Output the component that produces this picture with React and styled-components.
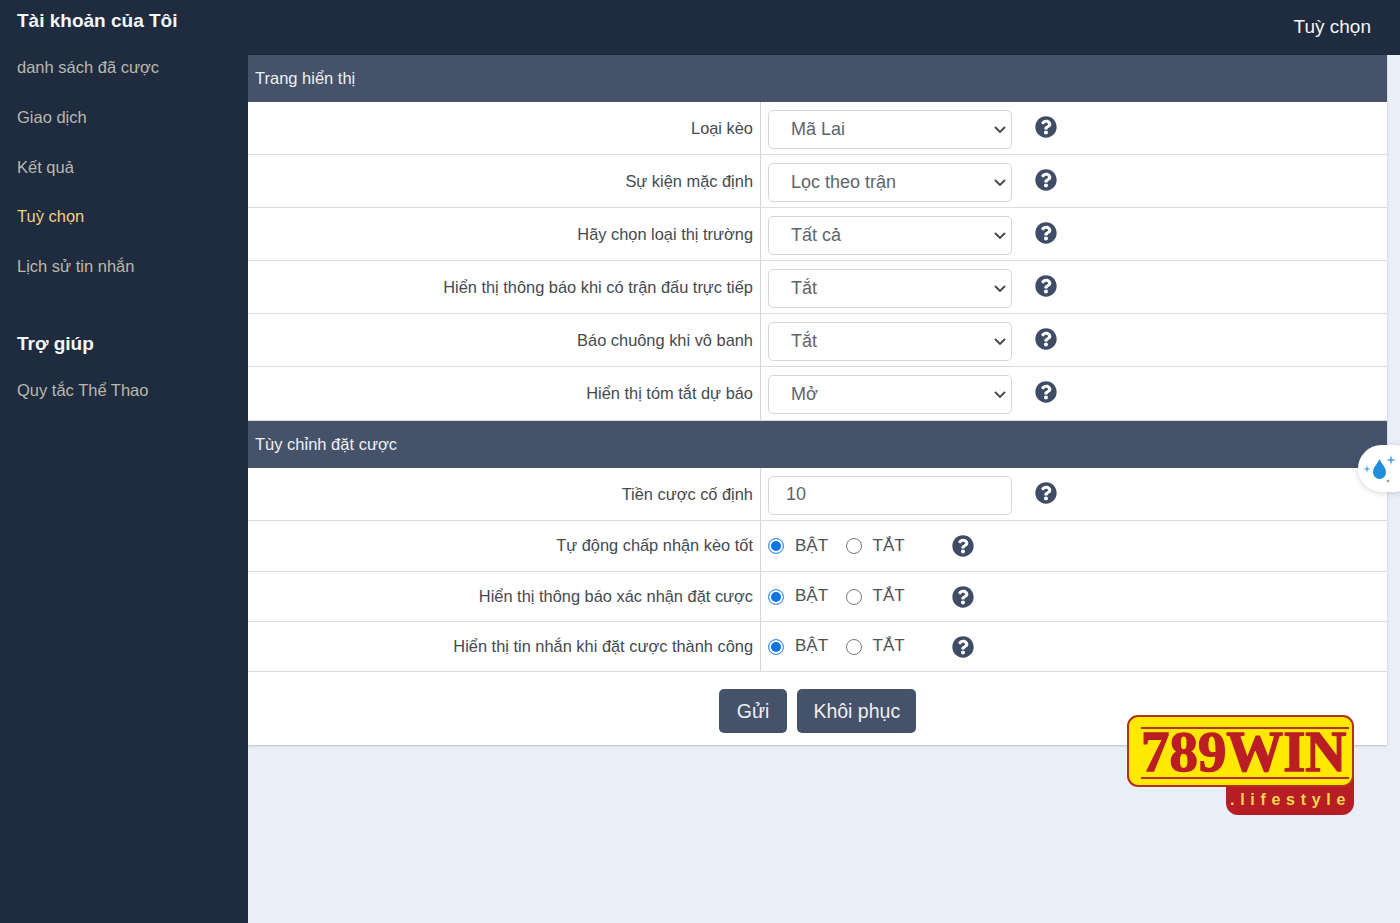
import React from "react";
import styled, { createGlobalStyle } from "styled-components";

const Global = createGlobalStyle`
  html, body { margin: 0; padding: 0; }
  body { font-family: "Liberation Sans", Arial, sans-serif; background: #e9eff6; }
  * { box-sizing: border-box; }
`;

const Page = styled.div`
  display: flex;
  width: 1400px;
  height: 923px;
  overflow: hidden;
  position: relative;
`;

const Sidebar = styled.aside`
  width: 248px;
  flex: none;
  background: #1f2b3e;
  padding: 10px 0 0 17px;
`;

const SideTitle = styled.h3`
  margin: ${(p) => p.$top || 0}px 0 0;
  font-size: 19px;
  line-height: 22px;
  font-weight: 700;
  color: #f6f6f6;
`;

const SideList = styled.ul`
  list-style: none;
  margin: 10.4px 0 0;
  padding: 0;
`;

const SideItem = styled.li`
  font-size: 16.5px;
  line-height: 20px;
  height: 49.6px;
  padding-top: 15px;
  color: ${(p) => (p.$active ? "#f2cf7e" : "#b9b9b0")};
`;

const Main = styled.main`
  flex: 1;
  display: flex;
  flex-direction: column;
  min-width: 0;
`;

const TopBar = styled.header`
  height: 55px;
  background: #1f2b3e;
  color: #f4f4f4;
  font-size: 19px;
  line-height: 53px;
  text-align: right;
  padding-right: 29px;
`;

const Panel = styled.section`
  width: 1139px;
  background: #fff;
  box-shadow: 0 1px 2px rgba(40, 50, 70, 0.25);
`;

const SectionHead = styled.div`
  height: 47px;
  background: #455269;
  color: #eef0f3;
  font-size: 16.5px;
  line-height: 47px;
  padding-left: 7px;
`;

const Row = styled.div`
  display: flex;
  height: ${(p) => p.$h || 53}px;
  border-bottom: 1px solid #dcdcdc;
`;

const Label = styled.div`
  width: 513px;
  flex: none;
  padding-right: 7px;
  text-align: right;
  font-size: 16.4px;
  line-height: 20px;
  color: #45494f;
  padding-top: ${(p) => p.$pt}px;
  border-right: 1px solid #d6d6d6;
`;

const Cell = styled.div`
  display: flex;
  align-items: center;
  padding-left: 7px;
  flex: 1;
  padding-top: ${(p) => p.$pt || 0}px;
  padding-bottom: ${(p) => p.$pb || 0}px;
`;

const SelectWrap = styled.div`
  position: relative;
  width: 244px;
  height: 39px;
  flex: none;
`;

const NativeSelect = styled.select`
  appearance: none;
  width: 100%;
  height: 100%;
  border: 1px solid #d3d6da;
  border-radius: 5px;
  background: #fff;
  padding: 0 0 2px 22px;
  font: 18px "Liberation Sans", Arial, sans-serif;
  color: #5f656c;
  outline: none;
`;

const Chevron = styled.svg`
  position: absolute;
  right: 6px;
  top: 15px;
  width: 12px;
  height: 9px;
  pointer-events: none;
`;

const TextInput = styled.input`
  width: 244px;
  height: 39px;
  flex: none;
  border: 1px solid #d3d6da;
  border-radius: 5px;
  padding: 0 0 3px 17px;
  font: 18px "Liberation Sans", Arial, sans-serif;
  color: #5f656c;
  outline: none;
`;

const HelpIcon = styled.svg`
  width: 22px;
  height: 22px;
  flex: none;
  display: block;
  margin-left: ${(p) => p.$ml}px;
  margin-top: ${(p) => p.$mt}px;
`;

const RadioLabel = styled.label`
  display: flex;
  align-items: center;
  font-size: 17px;
  color: #4d5157;
  width: 77.5px;
`;

const RadioDot = styled.input`
  appearance: none;
  width: 16px;
  height: 16px;
  margin: 1px 11px 0 0;
  border-radius: 50%;
  border: 1.5px solid ${(p) => (p.checked ? "#3f96ee" : "#777")};
  background: ${(p) => (p.checked ? "#0a75e8" : "#fff")};
  box-shadow: ${(p) => (p.checked ? "inset 0 0 0 2px #fff" : "none")};
  flex: none;
`;

const Actions = styled.div`
  display: flex;
  justify-content: center;
  gap: 10px;
  height: 73px;
  padding-top: 17px;
  background: #fff;
`;

const Button = styled.button`
  height: 44px;
  padding: 0 ${(p) => p.$px}px;
  background: #455269;
  color: #eef0f3;
  border: none;
  border-radius: 5px;
  font: 19.5px "Liberation Sans", Arial, sans-serif;
`;

const Floating = styled.div`
  position: absolute;
  left: 1358px;
  top: 445px;
  width: 60px;
  height: 47px;
  border-radius: 24px;
  background: #fff;
  box-shadow: 0 1px 6px rgba(60, 70, 90, 0.22);
`;

const FloatIcon = styled.svg`
  position: absolute;
  left: 4px;
  top: 7px;
  width: 34px;
  height: 34px;
`;

const Logo = styled.div`
  position: absolute;
  left: 1127px;
  top: 715px;
  width: 227px;
  height: 100px;
`;

const LogoTail = styled.div`
  position: absolute;
  right: 0;
  bottom: 0;
  width: 128px;
  height: 50px;
  background: #b81c24;
  border-radius: 0 0 12px 12px;
  color: #ecd94c;
  font: 700 16px "Liberation Sans", Arial, sans-serif;
  letter-spacing: 5.7px;
  padding: 24px 0 0 4px;
  line-height: 22px;
  white-space: nowrap;
`;

const LogoPlate = styled.div`
  position: absolute;
  inset: 0 0 28px 0;
  background: #ffe900;
  border: 2px solid #b5301f;
  border-radius: 11px;
  display: flex;
  align-items: center;
  justify-content: center;
`;

const LogoRule = styled.i`
  position: absolute;
  left: 12px;
  right: 3px;
  height: 2px;
  background: #b5301f;
  top: ${(p) => p.$top}px;
`;

const LogoWord = styled.span`
  font: 700 58px/60px "Liberation Serif", serif;
  color: #bb1d25;
  -webkit-text-stroke: 1.4px #bb1d25;
  transform: translate(3px, 1px) scaleX(0.98);
  white-space: nowrap;
`;

const Help = ({ ml, mt }) => (
  <HelpIcon $ml={ml} $mt={mt} viewBox="0 0 512 512">
    <path
      fill="#3f4c65"
      d="M504 256c0 137-111 248-248 248S8 393 8 256C8 119 119 8 256 8s248 111 248 248zM263 90c-54 0-89 23-116 64-4 5-2 12 3 16l35 26c5 4 13 3 17-2 18-23 30-36 57-36 20 0 45 13 45 33 0 15-13 23-33 34-24 13-55 30-55 71v4c0 7 5 12 12 12h56c7 0 12-5 12-12v-1c0-29 84-30 84-107 0-58-60-102-117-102zm-7 248c-26 0-47 21-47 46s21 46 47 46 46-21 46-46-20-46-46-46z"
    />
  </HelpIcon>
);

const Dropdown = ({ value }) => (
  <SelectWrap>
    <NativeSelect defaultValue={value}>
      <option>{value}</option>
    </NativeSelect>
    <Chevron viewBox="0 0 12 9">
      <path d="M1 2l5 5 5-5" fill="none" stroke="#444" strokeWidth="1.8" />
    </Chevron>
  </SelectWrap>
);

const Toggle = ({ name }) => (
  <>
    <RadioLabel>
      <RadioDot type="radio" name={name} checked readOnly />
      BẬT
    </RadioLabel>
    <RadioLabel>
      <RadioDot type="radio" name={name} checked={false} readOnly />
      TẮT
    </RadioLabel>
  </>
);

const selects = [
  ["Loại kèo", "Mã Lai"],
  ["Sự kiện mặc định", "Lọc theo trận"],
  ["Hãy chọn loại thị trường", "Tất cả"],
  ["Hiển thị thông báo khi có trận đấu trực tiếp", "Tắt"],
  ["Báo chuông khi vô banh", "Tắt"],
  ["Hiển thị tóm tắt dự báo", "Mở"],
];

const toggles = [
  "Tự động chấp nhận kèo tốt",
  "Hiển thị thông báo xác nhận đặt cược",
  "Hiển thị tin nhắn khi đặt cược thành công",
];

export default function App() {
  return (
    <Page>
      <Global />
      <Sidebar>
        <SideTitle>Tài khoản của Tôi</SideTitle>
        <SideList>
          <SideItem>danh sách đã cược</SideItem>
          <SideItem>Giao dịch</SideItem>
          <SideItem>Kết quả</SideItem>
          <SideItem $active>Tuỳ chọn</SideItem>
          <SideItem>Lịch sử tin nhắn</SideItem>
        </SideList>
        <SideTitle $top={42.5}>Trợ giúp</SideTitle>
        <SideList>
          <SideItem>Quy tắc Thể Thao</SideItem>
        </SideList>
      </Sidebar>
      <Main>
        <TopBar>Tuỳ chọn</TopBar>
        <Panel>
          <SectionHead>Trang hiển thị</SectionHead>
          {selects.map(([label, value], i) => (
            <Row key={label} $h={i === 5 ? 54 : 53}>
              <Label $pt={16}>{label}</Label>
              <Cell $pt={3} $pb={i === 5 ? 1 : 0}>
                <Dropdown value={value} />
                <Help ml={23} mt={-5} />
              </Cell>
            </Row>
          ))}
          <SectionHead>Tùy chỉnh đặt cược</SectionHead>
          <Row>
            <Label $pt={16}>Tiền cược cố định</Label>
            <Cell $pt={3}>
              <TextInput defaultValue="10" />
              <Help ml={23} mt={-5} />
            </Cell>
          </Row>
          {toggles.map((label, i) => (
            <Row key={label} $h={i === 0 ? 51 : 50}>
              <Label $pt={14}>{label}</Label>
              <Cell $pb={1}>
                <Toggle name={`t${i}`} />
                <Help ml={29} mt={1} />
              </Cell>
            </Row>
          ))}
          <Actions>
            <Button $px={18}>Gửi</Button>
            <Button $px={16}>Khôi phục</Button>
          </Actions>
        </Panel>
      </Main>
      <Floating>
        <FloatIcon viewBox="0 0 34 34">
          <path d="M17.5 7c2 5 6.500 8 6.500 13.500a6.500 6.500 0 0 1-13 0C11 15 15.500 12 17.500 7z" fill="#1f8fdc" />
          <path d="M29 3l1 4 4 1-4 1-1 4-1-4-4-1 4-1zM5 13l.8 3.200 3.200.8-3.200.8L5 21l-.8-3.200L1 17l3.200-.8z" fill="#4aa7de" />
          <circle cx="26" cy="29" r="1.3" fill="#8a9aa8" />
        </FloatIcon>
      </Floating>
      <Logo>
        <LogoTail>.lifestyle</LogoTail>
        <LogoPlate>
          <LogoRule $top={10} />
          <LogoWord>789WIN</LogoWord>
          <LogoRule $top={60} />
        </LogoPlate>
      </Logo>
    </Page>
  );
}
